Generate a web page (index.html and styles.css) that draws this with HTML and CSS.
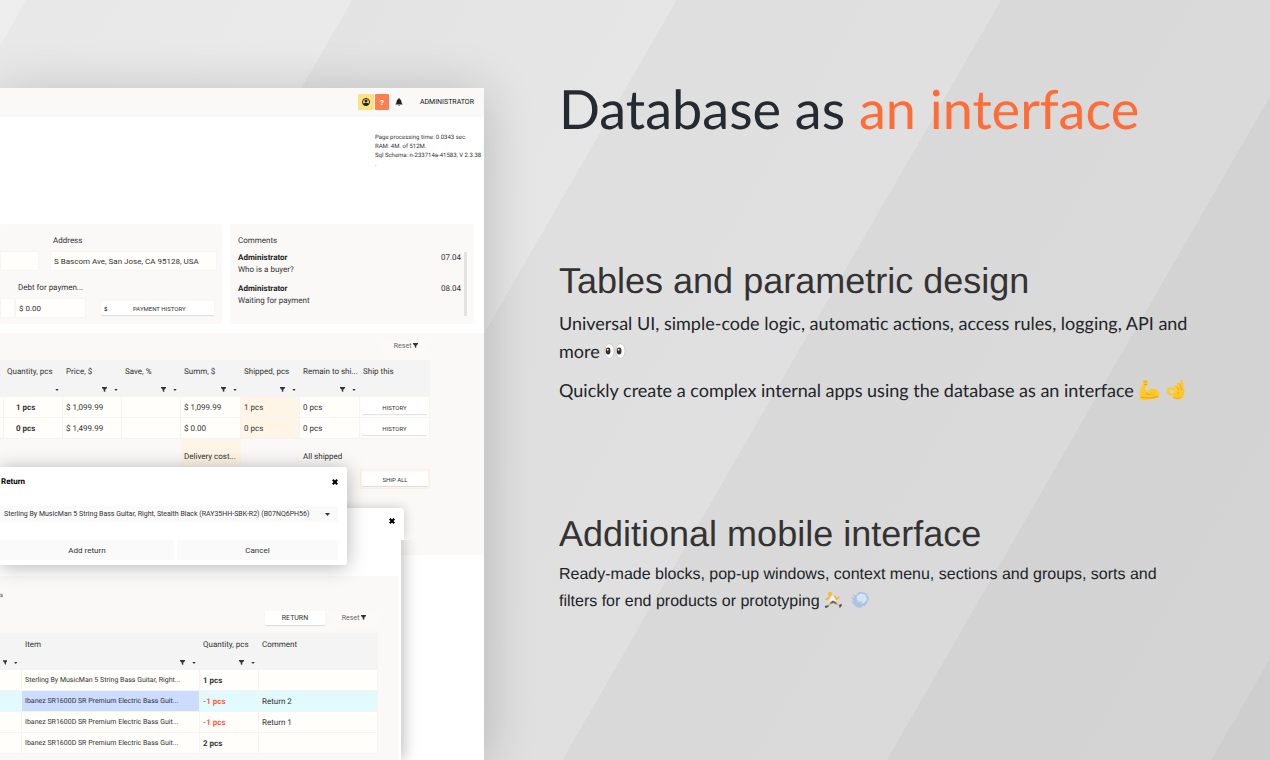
FILE: index.html
```html
<!DOCTYPE html>
<html lang="en">
<head>
    <meta charset="UTF-8">
    <meta name="viewport" content="width=device-width, initial-scale=1.0">
    <title>Database as an interface</title>
    <link rel="stylesheet" href="styles.css">
</head>
<body>
    <!-- Shared icons -->
    <svg class="sprite" aria-hidden="true">
        <symbol id="filter" viewBox="0 0 10 10"><path d="M0 0h10v2L6.500 5.500V10L3.500 8.500v-3L0 2z"/></symbol>
        <symbol id="caret" viewBox="0 0 10 6"><path d="M0 0h10L5 6z"/></symbol>
        <symbol id="close" viewBox="0 0 10 10"><path d="M2.500 0L5 2.500 7.500 0 10 2.500 7.500 5 10 7.500 7.500 10 5 7.500 2.500 10 0 7.500 2.500 5 0 2.500z"/></symbol>
    </svg>

    <div class="slide">
        <!-- Application window -->
        <section class="app">
            <header class="app-bar">
                <button class="icon-btn user" aria-label="Profile">
                    <svg viewBox="0 0 16 16"><circle cx="8" cy="8" r="7" fill="none" stroke="#222" stroke-width="2"/><circle cx="8" cy="6" r="3"/><path d="M2 12q2-3 4-2h4q2-1 4 2l-3 3H5z"/></svg>
                </button>
                <button class="icon-btn help" aria-label="Help">?</button>
                <button class="icon-btn bell" aria-label="Notifications">
                    <svg viewBox="0 0 16 16"><path d="M7 0h2v2q4 1 4 6 0 3 2 4v1H1v-1q2-1 2-4 0-5 4-6zM6 14h4q-2 3-4 0z"/></svg>
                </button>
                <a href="#" class="admin-link">ADMINISTRATOR</a>
            </header>

            <div class="debug">Page processing time: 0.0343 sec.<br>RAM: 4M. of 512M.<br>Sql Schema: n-233714a-41583, V 2.3.38<br>.</div>

            <div class="cards">
                <div class="card order-card">
                    <div class="field-row">
                        <input class="stub-top" type="text" aria-label="City">
                        <div class="field address">
                            <label for="address">Address</label>
                            <input id="address" type="text" value="S Bascom Ave, San Jose, CA 95128, USA">
                        </div>
                    </div>
                    <div class="field-row">
                        <input class="stub-bottom" type="text" aria-label="Paid">
                        <div class="field debt">
                            <label for="debt">Debt for paymen...</label>
                            <input id="debt" type="text" value="$ 0.00">
                        </div>
                        <button class="btn payment"><b>$</b><span>PAYMENT HISTORY</span></button>
                    </div>
                </div>
                <div class="card comments">
                    <h4>Comments</h4>
                    <div class="comment-list">
                        <div class="comment"><b>Administrator</b><time>07.04</time><p>Who is a buyer?</p></div>
                        <div class="comment"><b>Administrator</b><time>08.04</time><p>Waiting for payment</p></div>
                    </div>
                </div>
            </div>

            <div class="items">
                <div class="toolbar"><button class="reset">Reset <svg class="filter"><use href="#filter"/></svg></button></div>
                <table class="grid items-grid">
                    <colgroup><col class="w-edge"><col class="w-num"><col class="w-num"><col class="w-num"><col class="w-sum"><col class="w-num"><col class="w-sum"><col></colgroup>
                    <thead>
                        <tr>
                            <th></th>
                            <th>Quantity, pcs<div class="tools"><svg class="caret"><use href="#caret"/></svg></div></th>
                            <th>Price, $<div class="tools"><svg class="filter"><use href="#filter"/></svg><svg class="caret"><use href="#caret"/></svg></div></th>
                            <th>Save, %<div class="tools"><svg class="filter"><use href="#filter"/></svg><svg class="caret"><use href="#caret"/></svg></div></th>
                            <th>Summ, $<div class="tools"><svg class="filter"><use href="#filter"/></svg><svg class="caret"><use href="#caret"/></svg></div></th>
                            <th>Shipped, pcs<div class="tools"><svg class="filter"><use href="#filter"/></svg><svg class="caret"><use href="#caret"/></svg></div></th>
                            <th>Remain to shi...<div class="tools"><svg class="filter"><use href="#filter"/></svg><svg class="caret"><use href="#caret"/></svg></div></th>
                            <th>Ship this<div class="tools"></div></th>
                        </tr>
                    </thead>
                    <tbody>
                        <tr><td></td><td class="qty">1 pcs</td><td>$ 1,099.99</td><td></td><td>$ 1,099.99</td><td class="warm">1 pcs</td><td>0 pcs</td><td class="action"><button class="btn">HISTORY</button></td></tr>
                        <tr><td></td><td class="qty">0 pcs</td><td>$ 1,499.99</td><td></td><td>$ 0.00</td><td class="warm">0 pcs</td><td>0 pcs</td><td class="action"><button class="btn">HISTORY</button></td></tr>
                    </tbody>
                    <tfoot>
                        <tr class="totals"><td></td><td></td><td></td><td></td><td class="warm">Delivery cost...</td><td></td><td>All shipped</td><td></td></tr>
                        <tr><td></td><td></td><td></td><td></td><td></td><td></td><td></td><td class="action ship-all"><button class="btn">SHIP ALL</button></td></tr>
                    </tfoot>
                </table>
            </div>

            <!-- Returns list -->
            <div class="returns">
                <div class="returns-head"><button class="close" aria-label="Close"><svg><use href="#close"/></svg></button></div>
                <div class="returns-body">
                    <div class="returns-panel">
                        <div class="section-mark">s</div>
                        <div class="toolbar"><button class="btn return-btn">RETURN</button><button class="reset">Reset <svg class="filter"><use href="#filter"/></svg></button></div>
                        <table class="grid returns-grid">
                            <colgroup><col class="w-first"><col class="w-item"><col class="w-num"><col></colgroup>
                            <thead>
                                <tr>
                                    <th>&nbsp;<div class="tools"><svg class="filter"><use href="#filter"/></svg><svg class="caret"><use href="#caret"/></svg></div></th>
                                    <th>Item<div class="tools"><svg class="filter"><use href="#filter"/></svg><svg class="caret"><use href="#caret"/></svg></div></th>
                                    <th>Quantity, pcs<div class="tools"><svg class="filter"><use href="#filter"/></svg><svg class="caret"><use href="#caret"/></svg></div></th>
                                    <th>Comment<div class="tools"></div></th>
                                </tr>
                            </thead>
                            <tbody>
                                <tr><td></td><td class="item">Sterling By MusicMan 5 String Bass Guitar, Right...</td><td><b>1 pcs</b></td><td></td></tr>
                                <tr class="active"><td></td><td class="item selected">Ibanez SR1600D SR Premium Electric Bass Guit...</td><td class="minus"><b>-1 pcs</b></td><td>Return 2</td></tr>
                                <tr><td></td><td class="item">Ibanez SR1600D SR Premium Electric Bass Guit...</td><td class="minus"><b>-1 pcs</b></td><td>Return 1</td></tr>
                                <tr><td></td><td class="item">Ibanez SR1600D SR Premium Electric Bass Guit...</td><td><b>2 pcs</b></td><td></td></tr>
                            </tbody>
                        </table>
                    </div>
                </div>
            </div>

            <!-- Return dialog -->
            <div class="dialog">
                <div class="dialog-head"><b>Return</b><button class="close" aria-label="Close"><svg><use href="#close"/></svg></button></div>
                <div class="select-wrap">
                    <select aria-label="Item to return"><option>Sterling By MusicMan 5 String Bass Guitar, Right, Stealth Black (RAY35HH-SBK-R2) (B07NQ6PH56)</option></select>
                    <svg class="caret"><use href="#caret"/></svg>
                </div>
                <div class="dialog-actions"><button>Add return</button><button>Cancel</button></div>
            </div>
        </section>

        <!-- Text column -->
        <section class="copy">
            <h1>Database as <span>an interface</span></h1>
            <div class="feature">
                <h2>Tables and parametric design</h2>
                <p>Universal UI, simple-code logic, automatic actions, access rules, logging, API and more
                    <svg class="emoji" viewBox="0 0 24 24" role="img" aria-label="eyes">
                        <ellipse cx="6" cy="12" rx="5" ry="8" fill="#fff" stroke="#c9c9c9"/><ellipse cx="18" cy="12" rx="5" ry="8" fill="#fff" stroke="#c9c9c9"/>
                        <ellipse cx="4.500" cy="12" rx="2.600" ry="3.800" fill="#3b2a24"/><ellipse cx="16.500" cy="12" rx="2.600" ry="3.800" fill="#3b2a24"/>
                        <circle cx="4" cy="10.500" r="1" fill="#fff"/><circle cx="16" cy="10.500" r="1" fill="#fff"/>
                    </svg></p>
                <p>Quickly create a complex internal apps using the database as an interface
                    <svg class="emoji" viewBox="0 0 24 24" role="img" aria-label="muscle">
                        <path d="M6 2q4-2 5 1l-1 4q-2 0-2 2l1 6q4-6 10-4 5 2 4 9-10 4-21 2-1-9 3-16z" fill="#ffc928"/>
                        <path d="M6 3l4 0M7 6h3M9 15q1 2 4 2M3 20q9 2 19-1" fill="none" stroke="#e8a01b" stroke-width="1.200"/>
                    </svg>
                    <svg class="emoji" viewBox="0 0 24 24" role="img" aria-label="ok hand">
                        <path d="M14 12l7-1q1 7-3 10-5 3-10-1l1-3 4-1z" fill="#ffc928"/>
                        <path d="M19.500 12L18 2M17 12L14 5M14.500 12L11 8" fill="none" stroke="#ffc928" stroke-width="2.600" stroke-linecap="round"/>
                        <path d="M13 13q-6-4-9-2-2 4 2 6 4 1 7-3" fill="none" stroke="#ffc928" stroke-width="2.600" stroke-linecap="round"/>
                        <path d="M16 5l2.500 7M13 8l2.500 4M9 20q5 3 9 0M13 17q2-1 2-3" fill="none" stroke="#e49b1a" stroke-width="0.800"/>
                    </svg></p>
            </div>
            <div class="feature small">
                <h2>Additional mobile interface</h2>
                <p>Ready-made blocks, pop-up windows, context menu, sections and groups, sorts and filters for end products or prototyping
                    <svg class="emoji" viewBox="0 0 24 24" role="img" aria-label="runner">
                        <circle cx="8" cy="4" r="3" fill="#f7bd32"/><path d="M7 8l6-2 3 7-4 3-4-3z" fill="#f4f4f4"/>
                        <path d="M8 8L3 11M14 7l3 4 3-3M11 15l-5 4M14 15l6 4" fill="none" stroke="#f2b12e" stroke-width="2" stroke-linecap="round"/>
                        <path d="M11 13l-3 3 2 1 3-1 3 2 1-2-4-3z" fill="#6c665c"/><path d="M1 20l5-1v2l-4 2zM20 19l3-2 1 2-3 4z" fill="#445276"/>
                    </svg>
                    <svg class="emoji" viewBox="0 0 24 24" role="img" aria-label="dash">
                        <path d="M8 4q3-5 8-2 5-1 6 4 4 4 0 8-1 6-6 6-4 5-8 1-4 0-4-4l-4 0 3-2-3-2h4L0 8l5 1-3-5 5 2z" fill="#a9c5e0"/>
                        <path d="M9 6q4-4 7-2 4 0 4 4 3 3-1 6-2 4-6 2-5 0-4-3-3-4 0-7z" fill="#d5e4f2"/>
                        <path d="M10 14q2 3 5 0" fill="none" stroke="#86a9cb" stroke-width="1"/>
                    </svg></p>
            </div>
        </section>
    </div>
</body>
</html>
```
FILE: styles.css
```css
* {
    box-sizing: border-box;
}
body {
    margin: 0;
    height: 100vh;
    overflow: hidden;
    font-family: Roboto, Arial, sans-serif;
    color: #333;
    text-rendering: geometricPrecision;
    background: linear-gradient(120deg,
        #efefef 0, #ededed 23px,
        #e8e8e8 23px, #eaeaea 305px,
        #e3e3e3 305px, #e6e6e6 586px,
        #dfdfdf 586px, #e0e0e0 867px,
        #d9d9d9 867px, #dadada 1148px,
        #d3d3d3 1148px, #d4d4d4 1429px,
        #cecece 1429px);
}
h1, h2, h4, p {
    margin: 0;
    font-weight: normal;
}
h4 {
    font-size: 8px;
}
button, input, select {
    font-family: inherit;
    color: inherit;
    border: none;
    margin: 0;
    padding: 0;
    border-radius: 1px;
}
button {
    cursor: pointer;
}
.sprite {
    position: absolute;
    width: 0;
    height: 0;
}
.slide {
    display: grid;
    grid-template-columns: 484px 1fr;
    column-gap: 75px;
    min-height: 100vh;
    padding: 88px 80px 0 0;
}

/* application window */
.app {
    position: relative;
    height: calc(100vh - 88px);
    background: #fff;
    font-size: 8px;
    line-height: 11px;
    box-shadow: 0 6px 50px rgba(0,0,0,0.2);
}
.app-bar {
    display: flex;
    align-items: center;
    height: 29px;
    padding: 0 10px 1px 0;
    justify-content: flex-end;
    background: #faf9f8;
    font-size: 7px;
}
.icon-btn {
    display: flex;
    align-items: center;
    justify-content: center;
    width: 16px;
    height: 16px;
    margin-right: 1px;
    background: none;
}
.icon-btn svg {
    width: 8px;
    height: 8px;
    fill: #222;
}
.icon-btn.user {
    background: #ffe083;
}
.icon-btn.help {
    width: 14px;
    background: #ff7f50;
    color: #fff;
    font-size: 8px;
    font-weight: bold;
}
.icon-btn.bell {
    width: 18px;
    margin-right: 12px;
}
.admin-link {
    color: #111;
    text-decoration: none;
}
.debug {
    height: 107px;
    padding: 16px 0 0 375px;
    font-size: 6px;
    line-height: 9px;
    white-space: nowrap;
}
.cards {
    display: grid;
    grid-template-columns: 222px 1fr;
    gap: 8px;
    height: 100px;
    padding-right: 10px;
}
.card {
    background: #faf9f8;
    border-radius: 3px;
}
.order-card {
    padding-top: 11px;
}
.field-row {
    display: flex;
    align-items: flex-end;
    height: 36px;
}
.field-row + .field-row {
    margin-top: 11px;
}
.field {
    display: flex;
    flex-direction: column;
    justify-content: space-between;
    height: 36px;
}
.field label {
    padding-left: 3px;
}
input {
    height: 20px;
    padding: 0 3px;
    background: #fffefb;
    border: 1px solid #f6f5f3;
    font-size: 8px;
}
.stub-top {
    width: 39px;
    margin-right: 11px;
}
.stub-bottom {
    width: 15px;
}
.address {
    width: 167px;
}
.debt {
    width: 71px;
}
.btn {
    height: 14px;
    background: #fff;
    font-size: 6px;
    box-shadow: 0 1px 1px rgba(0,0,0,0.12);
}
.payment {
    display: flex;
    align-items: center;
    width: 113px;
    margin: 0 0 3px 15px;
    padding: 0 3px;
}
.payment span {
    flex: 1;
}
.comments {
    padding: 11px 7px 0 8px;
}
.comment-list {
    height: 64px;
    margin-top: 6px;
    border-right: 3px solid #e3e2e1;
}
.comment {
    display: grid;
    grid-template-columns: 1fr auto;
    row-gap: 1px;
    margin-bottom: 8px;
    padding-right: 3px;
    line-height: 11px;
}
.comment b {
    color: #222;
}
.items {
    height: 222px;
    margin-top: 9px;
    background: #faf9f8;
}
.toolbar {
    display: flex;
    justify-content: flex-end;
    align-items: center;
    gap: 5px;
}
.items .toolbar {
    width: 430px;
    height: 27px;
    padding-bottom: 2px;
}
.reset {
    width: 48px;
    height: 15px;
    background: #fbfaf9;
    color: #666;
    font-size: 7px;
}
.filter {
    width: 5px;
    height: 5px;
    fill: #333;
}
.caret {
    width: 4px;
    height: 2px;
    fill: #333;
}

/* data grids */
.grid {
    table-layout: fixed;
    border-collapse: separate;
    border-spacing: 0;
}
.items-grid {
    width: 430px;
}
.w-edge {
    width: 4px;
}
.w-num {
    width: 59px;
}
.w-sum {
    width: 60px;
}
.w-first {
    width: 22px;
}
.w-item {
    width: 178px;
}
.grid th {
    height: 37px;
    padding: 6px 0 0 3px;
    background: #f4f4f4;
    font-weight: normal;
    text-align: left;
    vertical-align: top;
    white-space: nowrap;
}
.grid td {
    height: 21px;
    padding: 0 0 0 3px;
    background: #fffefb;
    border-right: 1px solid #f5f4f2;
    border-bottom: 1px solid #f5f4f2;
    white-space: nowrap;
}
.grid .item {
    font-size: 7px;
}
.tools {
    display: flex;
    justify-content: flex-end;
    align-items: center;
    gap: 7px;
    height: 11px;
    margin-top: 7px;
    padding-right: 4px;
}
.grid .qty {
    padding-left: 12px;
    font-weight: bold;
}
.grid .warm {
    background: #fef5e6;
}
.grid .action {
    padding: 0 2px;
}
.action .btn {
    display: block;
    width: 100%;
}
.grid tfoot td {
    height: 20px;
    background: none;
    border: none;
}
.grid .totals td {
    height: 30px;
    padding-top: 5px;
}
.grid tfoot .warm {
    background: #fef5e6;
}
.grid tfoot .ship-all {
    padding: 0 1px;
    border: 1px solid #fef0da;
}

/* returns window */
.close {
    display: flex;
    background: none;
}
.close svg {
    width: 6px;
    height: 6px;
    fill: #000;
}
.returns {
    position: absolute;
    top: 420px;
    bottom: 0;
    left: 0;
    width: 404px;
}
.returns-head {
    display: flex;
    justify-content: flex-end;
    height: 32px;
    padding: 10px 9px 0 0;
    background: #fff;
    border-radius: 0 3px 0 0;
    box-shadow: 0 0 12px rgba(0,0,0,0.2);
}
.returns-body {
    position: relative;
    height: calc(100% - 32px);
    margin-right: 3px;
    padding: 36px 3px 0 0;
    background: #fff;
    box-shadow: 3px 0 14px rgba(0,0,0,0.25);
    clip-path: inset(0 -30px 0 0);
}
.returns-panel {
    height: 100%;
    padding-top: 14px;
    background: #faf9f8;
}
.section-mark {
    font-size: 6px;
}
.returns .toolbar {
    width: 378px;
    height: 32px;
    padding-top: 2px;
}
.return-btn {
    width: 60px;
    font-size: 7px;
}
.returns-grid {
    width: 378px;
}
.active td {
    background: #e1fafb;
}
.active .selected {
    background: #ccdcff;
}
.minus {
    color: #ff5a43;
}

/* return dialog */
.dialog {
    position: absolute;
    top: 379px;
    left: 0;
    width: 347px;
    height: 98px;
    padding-right: 9px;
    background: #fff;
    border-radius: 0 3px 3px 0;
    box-shadow: 0 2px 20px rgba(0,0,0,0.3);
}
.dialog-head {
    display: flex;
    justify-content: space-between;
    align-items: center;
    height: 39px;
    padding: 0 0 10px 1px;
    color: #000;
}
.select-wrap {
    position: relative;
    height: 16px;
    background: #fafafa;
}
.select-wrap select {
    display: block;
    width: 100%;
    height: 16px;
    padding-left: 4px;
    appearance: none;
    background: none;
    font-size: 7px;
}
.select-wrap .caret {
    position: absolute;
    top: 7px;
    right: 8px;
    width: 5px;
    height: 3px;
}
.dialog-actions {
    display: grid;
    grid-template-columns: 174px 1fr;
    gap: 3px;
    margin-top: 18px;
}
.dialog-actions button {
    height: 20px;
    background: #fafafa;
    font-size: 8px;
}

/* text column */
.copy {
    color: #212529;
}
.copy h1 {
    font-family: Lato, sans-serif;
    font-size: 54px;
    line-height: 66px;
    margin: -12px 0 117px;
    color: #252a30;
    white-space: nowrap;
}
.copy h1 span {
    color: #ff6c37;
}
.copy h2 {
    font-family: "Liberation Sans", Arial, sans-serif;
    font-size: 36px;
    line-height: 44px;
    margin-bottom: 6px;
    color: #333;
}
.feature {
    margin-bottom: 108px;
}
.feature p {
    font-family: Lato, sans-serif;
    font-size: 18px;
    line-height: 28px;
    margin-bottom: 11px;
}
.feature.small h2 {
    margin-bottom: 5px;
}
.feature.small p {
    font-family: "Liberation Sans", Arial, sans-serif;
    font-size: 16px;
    line-height: 27px;
}
.emoji {
    width: 22px;
    height: 22px;
    vertical-align: -4px;
}
.small .emoji {
    width: 18px;
    height: 18px;
    margin-right: 5px;
    vertical-align: -3px;
}
```
